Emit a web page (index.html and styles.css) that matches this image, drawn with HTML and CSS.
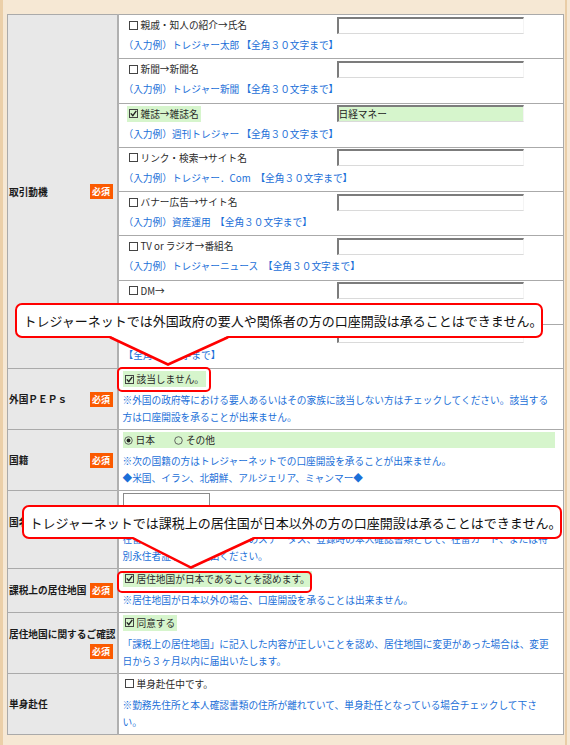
FILE: index.html
```html
<!DOCTYPE html>
<html lang="ja">
<head>
<meta charset="utf-8">
<title>お申込みフォーム</title>
<link rel="stylesheet" href="styles.css">
</head>
<body>
<div class="page">
  <table class="form">
    <colgroup><col class="c-label"><col class="c-value"></colgroup>
    <tbody>
      <tr>
        <th rowspan="8"><div class="lab"><span class="lt">取引動機</span><span class="req">必須</span></div></th>
        <td class="src">
          <div class="line"><span class="opt"><span class="chk"><svg class="box" viewBox="0 0 9 9"><rect x="0.5" y="0.5" width="8" height="8"/></svg>親戚・知人の紹介→氏名</span></span><input class="txt" type="text"></div>
          <div class="hint">（入力例）トレジャー太郎 【全角３０文字まで】</div>
        </td>
      </tr>
      <tr>
        <td class="src">
          <div class="line"><span class="opt"><span class="chk"><svg class="box" viewBox="0 0 9 9"><rect x="0.5" y="0.5" width="8" height="8"/></svg>新聞→新聞名</span></span><input class="txt" type="text"></div>
          <div class="hint">（入力例）トレジャー新聞 【全角３０文字まで】</div>
        </td>
      </tr>
      <tr>
        <td class="src">
          <div class="line"><span class="opt"><span class="chk on"><svg class="box" viewBox="0 0 9 9"><rect x="0.5" y="0.5" width="8" height="8"/><path d="M1.8 4.4 3.8 6.6 7.3 1.9"/></svg>雑誌→雑誌名</span></span><input class="txt on" type="text" value="日経マネー"></div>
          <div class="hint">（入力例）週刊トレジャー 【全角３０文字まで】</div>
        </td>
      </tr>
      <tr>
        <td class="src">
          <div class="line"><span class="opt"><span class="chk"><svg class="box" viewBox="0 0 9 9"><rect x="0.5" y="0.5" width="8" height="8"/></svg>リンク・検索→サイト名</span></span><input class="txt" type="text"></div>
          <div class="hint">（入力例）トレジャー．Com　【全角３０文字まで】</div>
        </td>
      </tr>
      <tr>
        <td class="src">
          <div class="line"><span class="opt"><span class="chk"><svg class="box" viewBox="0 0 9 9"><rect x="0.5" y="0.5" width="8" height="8"/></svg>バナー広告→サイト名</span></span><input class="txt" type="text"></div>
          <div class="hint">（入力例）資産運用&nbsp; 【全角３０文字まで】</div>
        </td>
      </tr>
      <tr>
        <td class="src">
          <div class="line"><span class="opt"><span class="chk"><svg class="box" viewBox="0 0 9 9"><rect x="0.5" y="0.5" width="8" height="8"/></svg>TV or ラジオ→番組名</span></span><input class="txt" type="text"></div>
          <div class="hint">（入力例）トレジャーニュース　【全角３０文字まで】</div>
        </td>
      </tr>
      <tr>
        <td class="src">
          <div class="line"><span class="opt"><span class="chk"><svg class="box" viewBox="0 0 9 9"><rect x="0.5" y="0.5" width="8" height="8"/></svg>DM→</span></span><input class="txt" type="text"></div>
          <div class="hint">（入力例）トレジャー通信　【全角３０文字まで】</div>
        </td>
      </tr>
      <tr>
        <td class="src">
          <div class="line"><span class="opt"><span class="chk"><svg class="box" viewBox="0 0 9 9"><rect x="0.5" y="0.5" width="8" height="8"/></svg>その他</span></span><input class="txt" type="text"></div>
          <div class="hint">【全角３０文字まで】</div>
        </td>
      </tr>
      <tr>
        <th><div class="lab"><span class="lt">外国ＰＥＰｓ</span><span class="req">必須</span></div></th>
        <td>
          <div class="chkline"><span class="chk on"><svg class="box" viewBox="0 0 9 9"><rect x="0.5" y="0.5" width="8" height="8"/><path d="M1.8 4.4 3.8 6.6 7.3 1.9"/></svg>該当しません。</span></div>
          <p class="note">※外国の政府等における要人あるいはその家族に該当しない方はチェックしてください。該当する<br>方は口座開設を承ることが出来ません。</p>
        </td>
      </tr>
      <tr>
        <th><div class="lab"><span class="lt">国籍</span><span class="req">必須</span></div></th>
        <td>
          <div class="radios">
            <span class="rd"><svg class="rad" viewBox="0 0 9 9"><circle cx="4.5" cy="4.5" r="3.8"/><circle class="dot" cx="4.5" cy="4.5" r="1.9"/></svg>日本</span>
            <span class="rd"><svg class="rad" viewBox="0 0 9 9"><circle cx="4.5" cy="4.5" r="3.8"/></svg>その他</span>
          </div>
          <p class="note">※次の国籍の方はトレジャーネットでの口座開設を承ることが出来ません。<br>◆米国、イラン、北朝鮮、アルジェリア、ミャンマー◆</p>
        </td>
      </tr>
      <tr>
        <th class="shift"><div class="lab"><span class="lt">国名</span></div></th>
        <td>
          <input class="small" type="text">
          <p class="note tight">※国籍が「その他」の方は国名をご入力ください。外国籍の方は、在留資格をご確認の上、<br>在留資格を確認のうえ、ビザのステータス、登録時の本人確認書類として、在留カード、または特<br>別永住者証明書を提出ください。</p>
        </td>
      </tr>
      <tr>
        <th><div class="lab"><span class="lt">課税上の居住地国</span><span class="req">必須</span></div></th>
        <td>
          <div class="chkline"><span class="chk on"><svg class="box" viewBox="0 0 9 9"><rect x="0.5" y="0.5" width="8" height="8"/><path d="M1.8 4.4 3.8 6.6 7.3 1.9"/></svg>居住地国が日本であることを認めます。</span></div>
          <p class="note">※居住地国が日本以外の場合、口座開設を承ることは出来ません。</p>
        </td>
      </tr>
      <tr>
        <th><div class="lab"><span class="lt">居住地国に関するご確認</span><span class="req">必須</span></div></th>
        <td>
          <div class="chkline"><span class="chk on"><svg class="box" viewBox="0 0 9 9"><rect x="0.5" y="0.5" width="8" height="8"/><path d="M1.8 4.4 3.8 6.6 7.3 1.9"/></svg>同意する</span></div>
          <p class="note">「課税上の居住地国」に記入した内容が正しいことを認め、居住地国に変更があった場合は、変更<br>日から３ヶ月以内に届出いたします。</p>
        </td>
      </tr>
      <tr>
        <th><div class="lab"><span class="lt">単身赴任</span></div></th>
        <td>
          <div class="chkline"><span class="chk"><svg class="box" viewBox="0 0 9 9"><rect x="0.5" y="0.5" width="8" height="8"/></svg>単身赴任中です。</span></div>
          <p class="note">※勤務先住所と本人確認書類の住所が離れていて、単身赴任となっている場合チェックして下さ<br>い。</p>
        </td>
      </tr>
    </tbody>
  </table>

  <div class="callout c1">トレジャーネットでは外国政府の要人や関係者の方の口座開設は承ることはできません。</div>
  <svg class="tail t1" viewBox="0 0 124 32"><polygon points="2,0 60,28.5 120,0"/><polyline points="2,1.25 60,28.5 120,1.25"/></svg>
  <div class="hl hl1"></div>

  <div class="callout c2">トレジャーネットでは課税上の居住国が日本以外の方の口座開設は承ることはできません。</div>
  <svg class="tail t2" viewBox="0 0 126 34"><polygon points="2,0 60,30.5 123,0"/><polyline points="2,1.25 60,30.5 123,1.25"/></svg>
  <div class="hl hl2"></div>
</div>
</body>
</html>
```

FILE: styles.css
```css
* { box-sizing: border-box; }
html, body { margin: 0; padding: 0; }
body {
  width: 570px;
  min-height: 745px;
  background: linear-gradient(to right, #ebcfa8 0, #ebcfa8 3px, #f6e8d4 3px, #f6e8d4 565px, #e9cda7 565px, #e9cda7 567px, #f6e8d4 567px);
  font-family: "Noto Sans CJK JP", "Noto Sans", sans-serif;
  font-size: 9.7px;
  color: #2a2a2a;
}
.page {
  position: relative;
  padding: 14px 0 11px 7px;
}
.form {
  border-collapse: collapse;
  table-layout: fixed;
  width: 556px;
  background: #fff;
}
.c-label { width: 110px; }
.c-value { width: 446px; }
.form th, .form td { border: 1px solid #aaa; }
.form th {
  background: #e8e8e8;
  border-right: 2px solid #b0b0b0;
  padding: 0 4px 0 1px;
  font-weight: 700;
  text-align: left;
  vertical-align: middle;
  color: #1a1a1a;
}
.form th.shift { padding-bottom: 15px; }
.form td {
  vertical-align: top;
  padding: 2px 8px 3px 4px;
}
.form td.src { padding: 1px 8px 4.25px 5px; }

.lab {
  display: flex;
  flex-wrap: wrap;
  align-items: center;
  row-gap: 3px;
  line-height: 14px;
}
.lt { white-space: nowrap; }
.req {
  margin-left: auto;
  width: 23px;
  height: 15px;
  display: flex;
  align-items: center;
  justify-content: center;
  background: #fb5a00;
  color: #fff;
  font-size: 9px;
  font-weight: 700;
  line-height: 1;
}

.line { display: flex; align-items: center; height: 18px; }
.opt { flex: none; width: 210px; margin-left: 3px; }
.chk {
  display: inline-flex;
  align-items: center;
  gap: 3px;
  height: 16px;
  padding: 0 2px;
  line-height: 16px;
  white-space: nowrap;
}
.chk.on { background: #d6f5cc; }
.box { width: 9px; height: 9px; flex: none; fill: none; stroke: #444; stroke-width: 1; }
.box path { stroke: #222; stroke-width: 1.4; }

.txt {
  width: 187px;
  height: 17px;
  margin: 0;
  padding: 0;
  border-style: solid;
  border-width: 2px 1px 1px 2px;
  border-color: #7c7c7c #f4f4f4 #dadada #7c7c7c;
  background: #fff;
  font-family: "Noto Sans CJK JP", sans-serif;
  font-size: 9.7px;
  color: #222;
}
.txt.on { background: #d6f5cc; }

.hint {
  margin-top: 2px;
  height: 18px;
  line-height: 18px;
  color: #1b6fd8;
  white-space: nowrap;
}

.chkline { display: flex; align-items: center; height: 16px; }
.note {
  margin: 5px 0 0;
  line-height: 17px;
  color: #1b6fd8;
  white-space: nowrap;
}
.note.tight { margin-top: 2.5px; }

.radios {
  display: flex;
  align-items: center;
  height: 16px;
  background: #d6f5cc;
  padding-left: 1px;
}
.rd { display: inline-flex; align-items: center; gap: 3px; }
.rd + .rd { margin-left: 19px; }
.rad { width: 9px; height: 9px; fill: none; stroke: #555; stroke-width: 0.9; }
.rad .dot { fill: #222; stroke: none; }

.small {
  display: block;
  width: 87px;
  height: 18px;
  margin: 0;
  border: 1px solid #8a8a8a;
  background: #fff;
}

.callout {
  position: absolute;
  display: flex;
  align-items: center;
  background: #fff;
  border: 2.5px solid #ff0000;
  border-radius: 7px;
  font-size: 13px;
  color: #111;
  white-space: nowrap;
  line-height: 1;
}
.c1 { left: 15px; top: 303px; width: 528px; height: 35px; padding-left: 6.5px; }
.c2 { left: 22px; top: 505px; width: 540px; height: 34px; padding-left: 5.5px; }
.tail { position: absolute; overflow: visible; }
.tail polygon { fill: #fff; }
.tail polyline { fill: none; stroke: #ff0000; stroke-width: 2.5; }
.t1 { left: 108px; top: 335.5px; width: 124px; height: 32px; }
.t2 { left: 131px; top: 536.5px; width: 126px; height: 34px; }
.hl { position: absolute; border: 2.5px solid #ff0000; border-radius: 5px; }
.hl1 { left: 117px; top: 367px; width: 94px; height: 25px; }
.hl2 { left: 117px; top: 571px; width: 195px; height: 22px; }
```
